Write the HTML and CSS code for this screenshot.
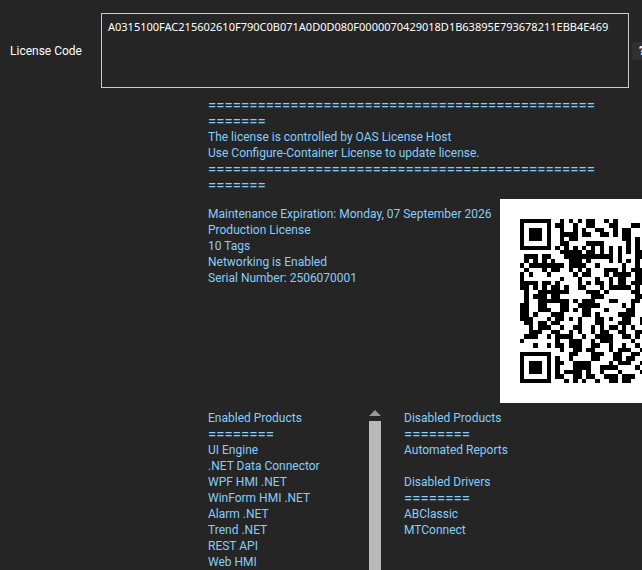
FILE: index.html
```html
<!DOCTYPE html>
<html lang="en">

<head>
    <meta charset="UTF-8">
    <meta name="viewport" content="width=device-width, initial-scale=1.0">
    <title>License</title>

    <link rel="stylesheet" href="styles.css">
</head>

<body>
    <div class="code-row">
        <label for="licenseCode">License Code</label>
        <textarea id="licenseCode" spellcheck="false">A0315100FAC215602610F790C0B071A0D0D080F0000070429018D1B63895E793678211EBB4E469</textarea>
        <button type="button" class="help">?</button>
    </div>

    <div class="details">
        <div class="message">
            <p class="rule">======================================================</p>
            <p>The license is controlled by OAS License Host</p>
            <p>Use Configure-Container License to update license.</p>
            <p class="rule">======================================================</p>
        </div>

        <div class="summary">
            <div class="facts">
                <p>Maintenance Expiration: Monday, 07 September 2026</p>
                <p>Production License</p>
                <p>10 Tags</p>
                <p>Networking is Enabled</p>
                <p>Serial Number: 2506070001</p>
            </div>
            <svg id="qrCode" class="qr" viewBox="0 0 204 204" role="img"></svg>
        </div>

        <div class="lists">
            <div class="enabled">
                <div class="list">
                    <p>Enabled Products</p>
                    <p class="rule">========</p>
                    <p>UI Engine</p>
                    <p>.NET Data Connector</p>
                    <p>WPF HMI .NET</p>
                    <p>WinForm HMI .NET</p>
                    <p>Alarm .NET</p>
                    <p>Trend .NET</p>
                    <p>REST API</p>
                    <p>Web HMI</p>
                </div>
                <div class="scrollbar">
                    <svg class="arrow" viewBox="0 0 12 6"><path d="M0 6 L6 0 L12 6 Z" /></svg>
                    <div class="thumb"></div>
                </div>
            </div>
            <div class="list">
                <p>Disabled Products</p>
                <p class="rule">========</p>
                <p>Automated Reports</p>
                <p class="gap">Disabled Drivers</p>
                <p class="rule">========</p>
                <p>ABClassic</p>
                <p>MTConnect</p>
            </div>
        </div>
    </div>

    <script src="qr.js"></script>
</body>

</html>
```
FILE: styles.css
```css
body {
    font-family: Roboto, 'Noto Sans', sans-serif;
    font-size: 12px;
    line-height: 16px;
    background-color: #252525;
    color: #fff;
    margin: 0;
    height: 100vh;
    box-sizing: border-box;
    padding-top: 13px;
    display: flex;
    flex-direction: column;
    overflow: hidden;
}

p {
    margin: 0;
}

.code-row {
    display: flex;
    align-items: center;
    padding-left: 10px;
}

.code-row label {
    flex: 0 0 91px;
}

textarea {
    flex: 1;
    min-width: 0;
    height: 75px;
    padding: 5px 0 5px 6px;
    box-sizing: border-box;
    border: 1px solid #ccc;
    border-radius: 0;
    background-color: #252525;
    color: #fff;
    font-family: 'Noto Sans', sans-serif;
    font-size: 11px;
    line-height: 16px;
    resize: none;
    outline: none;
    overflow: hidden;
}

.help {
    flex: none;
    width: 20px;
    height: 18px;
    margin-left: 3px;
    margin-right: -10px;
    padding: 0;
    border: none;
    border-radius: 3px;
    background-color: #303030;
    color: #fff;
    font-family: inherit;
    font-size: 12px;
    font-weight: bold;
    line-height: 18px;
}

.details {
    flex: 1;
    min-height: 0;
    display: flex;
    flex-direction: column;
    margin-left: 208px;
    padding-top: 9px;
    color: #87cefa;
}

.message {
    max-width: 390px;
    margin-bottom: 6px;
}

.rule {
    font-size: 15px;
    word-break: break-all;
}

.summary {
    display: flex;
}

.facts {
    flex: none;
    width: 292px;
    padding-top: 7px;
    white-space: nowrap;
}

.qr {
    flex: none;
    width: 204px;
    height: 204px;
    background-color: #fff;
}

.lists {
    flex: 1;
    min-height: 0;
    display: flex;
    gap: 23px;
    padding-top: 7px;
}

.enabled {
    display: flex;
    flex: 0 0 173px;
}

.enabled .list {
    flex: 1;
}

.gap {
    margin-top: 16px;
}

.scrollbar {
    display: flex;
    flex-direction: column;
    gap: 5px;
    width: 12px;
}

.arrow {
    flex: none;
    width: 12px;
    height: 6px;
    fill: #999;
}

.thumb {
    flex: 1;
    background-color: #b9b9b9;
}
```
FILE: qr.js
```js
// one string per module row
const rows = [
    '1111111001010101100101000000',
    '1000001011001001100011000110',
    '1011101001001010011001011000',
    '1011101001111011001101011000',
    '1011101001011000000000011010',
    '1000001001100001111000001010',
    '1111111010101010101010101010',
    '0000000001111101101010101011',
    '0111011000111111111110100011',
    '0101010100011101000010101010',
    '1011111111011110010000010010',
    '0100010110010101000111010111',
    '1010001000001011000101111011',
    '1000000001000100010010110011',
    '1111011010000101011010110111',
    '1101010110100110001011111010',
    '0100111111100001110100000110',
    '0101110110000000111000000011',
    '0100111111101011100011000110',
    '1100110001100111110000010100',
    '1100111001101011000100001100',
    '1101000111000011010000111100',
    '1110001011010100011010011001',
    '0110110110000100011000111001',
    '0010111001001100101011010100',
    '0011100110010100101100110011',
    '0111001011110010011110011010',
    '1000000010011100101110000100',
    '0001001011011100110010010010',
    '0000000001001101100010111001',
    '1111111000011000111001100110',
    '1000001010010000110001101100',
    '1011101011001111000010111001',
    '1011101010001111001111000010',
    '1011101010111101001000100001',
    '1000001011001101100111011100',
    '1111111000101010010011011000'
];

const margin = 20;
const size = 164 / rows.length;
let d = '';

rows.forEach((row, y) => {
    const top = Math.round(margin + y * size);
    const bottom = Math.round(margin + (y + 1) * size);
    [...row].forEach((module, x) => {
        if (module === '1') {
            const left = Math.round(margin + x * size);
            const right = Math.round(margin + (x + 1) * size);
            d += `M${left} ${top}H${right}V${bottom}H${left}Z`;
        }
    });
});

const path = document.createElementNS('http://www.w3.org/2000/svg', 'path');
path.setAttribute('d', d);
document.getElementById('qrCode').appendChild(path);
```
